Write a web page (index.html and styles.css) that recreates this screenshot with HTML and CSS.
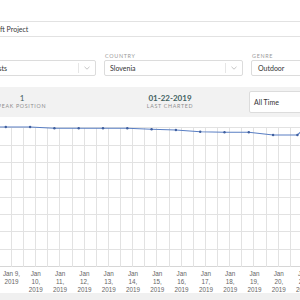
FILE: index.html
```html
<!DOCTYPE html>
<html>
<head>
<meta charset="utf-8">
<link rel="stylesheet" href="styles.css">
</head>
<body>
<div class="shift">
  <div class="title-input">The Craft Project</div>
  <div class="filters">
    <div class="field">
      <div class="label">CHART</div>
      <div class="select"><span class="value value-tight">Apple Podcasts</span><span class="arrow"><svg width="6" height="4" viewBox="0 0 6 4"><path d="M0.5 0.8 L3 3.2 L5.5 0.8" fill="none" stroke="#b5b5b5" stroke-width="0.8"/></svg></span></div>
    </div>
    <div class="field">
      <div class="label">COUNTRY</div>
      <div class="select"><span class="value">Slovenia</span><span class="arrow"><svg width="6" height="4" viewBox="0 0 6 4"><path d="M0.5 0.8 L3 3.2 L5.5 0.8" fill="none" stroke="#b5b5b5" stroke-width="0.8"/></svg></span></div>
    </div>
    <div class="field">
      <div class="label">GENRE</div>
      <div class="select"><span class="value value-wide">Outdoor</span><span class="arrow"><svg width="6" height="4" viewBox="0 0 6 4"><path d="M0.5 0.8 L3 3.2 L5.5 0.8" fill="none" stroke="#b5b5b5" stroke-width="0.8"/></svg></span></div>
    </div>
  </div>
  <div class="stats">
    <div class="stat stat-first">
      <div class="num">1</div>
      <div class="stat-label">PEAK POSITION</div>
    </div>
    <div class="stat stat-second">
      <div class="num num-date">01-22-2019</div>
      <div class="stat-label">LAST CHARTED</div>
    </div>
    <div class="range">All Time</div>
  </div>
</div>
<div class="chart">
  <svg width="300" height="176" viewBox="0 0 300 176">
    <g stroke="#e2e2e2" stroke-width="1">
      <line x1="0" y1="10.5" x2="300" y2="10.5"/>
      <line x1="0" y1="28.5" x2="300" y2="28.5"/>
      <line x1="0" y1="45.5" x2="300" y2="45.5"/>
      <line x1="0" y1="62.5" x2="300" y2="62.5"/>
      <line x1="0" y1="80.5" x2="300" y2="80.5"/>
      <line x1="0" y1="97.5" x2="300" y2="97.5"/>
      <line x1="0" y1="114.5" x2="300" y2="114.5"/>
      <line x1="0" y1="132.5" x2="300" y2="132.5"/>
    </g>
    <line x1="0" y1="149.5" x2="300" y2="149.5" stroke="#d6d6d6"/>
    <g stroke="#e2e2e2" stroke-width="1">
      <line x1="11.5" y1="10" x2="11.5" y2="150"/>
      <line x1="23.5" y1="10" x2="23.5" y2="150"/>
      <line x1="35.5" y1="10" x2="35.5" y2="150"/>
      <line x1="47.5" y1="10" x2="47.5" y2="150"/>
      <line x1="59.5" y1="10" x2="59.5" y2="150"/>
      <line x1="72.5" y1="10" x2="72.5" y2="150"/>
      <line x1="84.5" y1="10" x2="84.5" y2="150"/>
      <line x1="96.5" y1="10" x2="96.5" y2="150"/>
      <line x1="108.5" y1="10" x2="108.5" y2="150"/>
      <line x1="120.5" y1="10" x2="120.5" y2="150"/>
      <line x1="132.5" y1="10" x2="132.5" y2="150"/>
      <line x1="144.5" y1="10" x2="144.5" y2="150"/>
      <line x1="156.5" y1="10" x2="156.5" y2="150"/>
      <line x1="169.5" y1="10" x2="169.5" y2="150"/>
      <line x1="181.5" y1="10" x2="181.5" y2="150"/>
      <line x1="193.5" y1="10" x2="193.5" y2="150"/>
      <line x1="205.5" y1="10" x2="205.5" y2="150"/>
      <line x1="217.5" y1="10" x2="217.5" y2="150"/>
      <line x1="229.5" y1="10" x2="229.5" y2="150"/>
      <line x1="241.5" y1="10" x2="241.5" y2="150"/>
      <line x1="253.5" y1="10" x2="253.5" y2="150"/>
      <line x1="266.5" y1="10" x2="266.5" y2="150"/>
      <line x1="278.5" y1="10" x2="278.5" y2="150"/>
      <line x1="290.5" y1="10" x2="290.5" y2="150"/>
    </g>
    <polyline fill="none" stroke="#5a7fc4" stroke-width="1.1" points="-18,10 5.8,10 30.1,10 54.4,11.3 78.7,11.3 103,11.3 127.3,11.3 151.6,12.3 175.9,13 200.2,14.7 224.5,15.3 248.8,15.3 273.1,18 297.4,18 321.7,-6"/>
    <g fill="#3f5f9f">
      <circle cx="5.8" cy="10" r="1.2"/>
      <circle cx="30.1" cy="10" r="1.2"/>
      <circle cx="54.4" cy="11.3" r="1.2"/>
      <circle cx="78.7" cy="11.3" r="1.2"/>
      <circle cx="103" cy="11.3" r="1.2"/>
      <circle cx="127.3" cy="11.3" r="1.2"/>
      <circle cx="151.6" cy="12.3" r="1.2"/>
      <circle cx="175.9" cy="13" r="1.2"/>
      <circle cx="200.2" cy="14.7" r="1.2"/>
      <circle cx="224.5" cy="15.3" r="1.2"/>
      <circle cx="248.8" cy="15.3" r="1.2"/>
      <circle cx="273.1" cy="18" r="1.2"/>
      <circle cx="297.4" cy="18" r="1.2"/>
    </g>
    <g class="ticks" text-anchor="middle">
      <text x="11.5" y="159.3">Jan 9,</text><text x="11.5" y="167.3">2019</text>
      <text x="35.8" y="159.3">Jan</text><text x="35.8" y="167.3">10,</text><text x="35.8" y="175.3">2019</text>
      <text x="60.1" y="159.3">Jan</text><text x="60.1" y="167.3">11,</text><text x="60.1" y="175.3">2019</text>
      <text x="84.4" y="159.3">Jan</text><text x="84.4" y="167.3">12,</text><text x="84.4" y="175.3">2019</text>
      <text x="108.7" y="159.3">Jan</text><text x="108.7" y="167.3">13,</text><text x="108.7" y="175.3">2019</text>
      <text x="133" y="159.3">Jan</text><text x="133" y="167.3">14,</text><text x="133" y="175.3">2019</text>
      <text x="157.3" y="159.3">Jan</text><text x="157.3" y="167.3">15,</text><text x="157.3" y="175.3">2019</text>
      <text x="181.6" y="159.3">Jan</text><text x="181.6" y="167.3">16,</text><text x="181.6" y="175.3">2019</text>
      <text x="205.9" y="159.3">Jan</text><text x="205.9" y="167.3">17,</text><text x="205.9" y="175.3">2019</text>
      <text x="230.2" y="159.3">Jan</text><text x="230.2" y="167.3">18,</text><text x="230.2" y="175.3">2019</text>
      <text x="254.5" y="159.3">Jan</text><text x="254.5" y="167.3">19,</text><text x="254.5" y="175.3">2019</text>
      <text x="278.8" y="159.3">Jan</text><text x="278.8" y="167.3">20,</text><text x="278.8" y="175.3">2019</text>
      <text x="303.1" y="159.3">Jan</text><text x="303.1" y="167.3">21,</text><text x="303.1" y="175.3">2019</text>
    </g>
  </svg>
</div>
<div class="footer"></div>
</body>
</html>
```
FILE: styles.css
```css
html, body {
  margin: 0;
  padding: 0;
  width: 300px;
  height: 300px;
  overflow: hidden;
  background: #ffffff;
  font-family: Lato, "Open Sans", sans-serif;
}

.shift {
  margin-left: -43px;
  width: 433px;
  padding-top: 21px;
}

.title-input {
  box-sizing: border-box;
  height: 16px;
  border: 1px solid #e2e2e2;
  border-radius: 2px;
  font-size: 7px;
  line-height: 14px;
  padding-left: 18px;
  color: #3a3a3a;
  white-space: nowrap;
}

.filters {
  display: flex;
  gap: 8px;
  margin-top: 15px;
}

.field {
  width: 139px;
  flex: none;
}

.label {
  height: 8px;
  font-size: 5.4px;
  line-height: 8px;
  letter-spacing: 0.7px;
  color: #9a9a9a;
  padding-left: 1px;
}

.select {
  box-sizing: border-box;
  height: 16px;
  border: 1px solid #dcdcdc;
  border-radius: 2px;
  display: flex;
  align-items: center;
  font-size: 7px;
  color: #333;
  background: #fff;
}

.value {
  padding-left: 5px;
  white-space: nowrap;
}

.value-tight {
  padding-left: 2px;
}

.value-wide {
  padding-left: 6px;
}

.arrow {
  margin-left: auto;
  width: 16px;
  height: 10px;
  border-left: 1px solid #e6e6e6;
  display: flex;
  align-items: center;
  justify-content: center;
}

.stats {
  margin-top: 11px;
  height: 30px;
  background: #f2f2f2;
  display: flex;
  align-items: center;
}

.stat {
  flex: none;
  text-align: center;
}

.stat-first {
  width: 130px;
}

.stat-second {
  width: 148px;
  margin-left: 9px;
}

.num {
  font-size: 8px;
  line-height: 9px;
  color: #3e6060;
}

.num-date {
  font-weight: 700;
}

.stat-label {
  font-size: 5.3px;
  line-height: 7px;
  letter-spacing: 0.7px;
  color: #8e8e8e;
}

.range {
  box-sizing: border-box;
  margin-left: 5px;
  width: 140px;
  height: 22px;
  background: #fff;
  border: 1px solid #dcdcdc;
  border-radius: 2px;
  font-size: 7px;
  line-height: 20px;
  padding-left: 4px;
  color: #333;
}

.chart {
  height: 176px;
}

.chart svg {
  display: block;
}

.ticks {
  font-family: "Liberation Sans", Arial, sans-serif;
  font-size: 6.3px;
  fill: #666;
}

.footer {
  height: 7px;
  background: #f0f0f0;
}
```
